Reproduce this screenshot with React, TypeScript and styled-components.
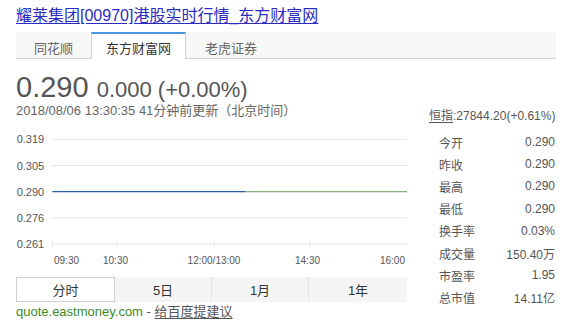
import React from "react";
import styled, { createGlobalStyle } from "styled-components";

const Global = createGlobalStyle`
  html, body { margin: 0; padding: 0; background: #fff; }
  body { font-family: "Liberation Sans", "Noto Sans CJK SC", sans-serif; }
`;

const Page = styled.div`
  width: 571px;
  height: 326px;
  box-sizing: border-box;
  padding: 5.5px 15px 0 16px;
  overflow: hidden;
  color: #555;
`;

const Title = styled.a`
  display: block;
  font-size: 16px;
  line-height: 20px;
  color: #2b2bc2;
  text-decoration: underline;
  text-underline-offset: 2px;
  white-space: nowrap;
`;

const TabBar = styled.div`
  margin-top: 6.5px;
  height: 26px;
  display: flex;
  background: #f7f7f7;
  border-bottom: 1px solid #d3d3d3;
`;

const Tab = styled.div<{ $active?: boolean; $w: number }>`
  width: ${(p) => p.$w}px;
  box-sizing: border-box;
  display: flex;
  align-items: center;
  justify-content: center;
  font-size: 13px;
  padding-top: 2px;
  color: ${(p) => (p.$active ? "#333" : "#666")};
  background: ${(p) => (p.$active ? "#fff" : "transparent")};
  border-top: 2px solid ${(p) => (p.$active ? "#4a94e0" : "transparent")};
  border-left: 1px solid ${(p) => (p.$active ? "#d3d3d3" : "transparent")};
  border-right: 1px solid ${(p) => (p.$active ? "#d3d3d3" : "transparent")};
  height: ${(p) => (p.$active ? "27px" : "26px")};
`;

const PriceRow = styled.div`
  margin-top: 11.5px;
  font-size: 29px;
  line-height: 32px;
  height: 32px;
  white-space: nowrap;
  color: #555;
`;

const BigPrice = styled.span`
  font-size: 29px;
`;

const Change = styled.span`
  font-size: 22px;
  line-height: 1;
`;

const Main = styled.div`
  display: flex;
  align-items: flex-start;
`;

const Left = styled.div`
  width: 391px;
  display: flex;
  flex-direction: column;
`;

const Stamp = styled.div`
  font-size: 13px;
  line-height: 16px;
  height: 16px;
  color: #666;
  white-space: nowrap;
`;

const ChartSvg = styled.svg`
  display: block;
  margin-top: 9.5px;
`;

const RangeTabs = styled.div`
  margin-top: 7px;
  display: grid;
  grid-template-columns: 99px 97px 97px 98px;
  height: 25px;
  background: #f5f5f5;
`;

const RangeTab = styled.div<{ $active?: boolean; $last?: boolean }>`
  box-sizing: border-box;
  display: flex;
  align-items: center;
  justify-content: center;
  font-size: 13px;
  color: #333;
  background: ${(p) => (p.$active ? "#fff" : "transparent")};
  border: ${(p) => (p.$active ? "1px solid #cfcfcf" : "none")};
  border-right: ${(p) =>
    p.$active ? "1px solid #cfcfcf" : p.$last ? "none" : "1px solid #e4e4e4"};
`;

const Footer = styled.div`
  font-size: 13px;
  line-height: 18px;
  height: 18px;
  margin-top: 1px;
  white-space: nowrap;
  color: #555;
`;

const Site = styled.span`
  color: #3d8a1e;
`;

const Suggest = styled.a`
  color: #555;
  text-decoration: underline;
  text-underline-offset: 2px;
`;

const Right = styled.div`
  margin-left: 22px;
  width: 127px;
  padding-top: 4px;
  display: flex;
  flex-direction: column;
`;

const Index = styled.div`
  font-size: 12px;
  line-height: 18px;
  height: 18px;
  text-align: right;
  color: #555;
  white-space: nowrap;
  padding-right: 1px;
`;

const IndexLink = styled.a`
  color: #555;
  text-decoration: underline;
  text-underline-offset: 2px;
`;

const Stats = styled.div`
  margin-top: 6.5px;
  display: flex;
  flex-direction: column;
`;

const StatRow = styled.div`
  height: 22.2px;
  display: flex;
  align-items: center;
  justify-content: space-between;
  padding-left: 10px;
  padding-right: 1px;
  font-size: 12px;
  color: #555;
`;

const grid = [
  { y: 11.3, label: "0.319" },
  { y: 37.5, label: "0.305" },
  { y: 63.7, label: "0.290" },
  { y: 89.9, label: "0.276" },
  { y: 116.1, label: "0.261" },
];

const ticks = [
  { x: 36.3, label: "09:30", anchor: "start", lx: 38 },
  { x: 100.7, label: "10:30", anchor: "middle", lx: 99.5 },
  { x: 198.3, label: "12:00/13:00", anchor: "middle", lx: 198 },
  { x: 294, label: "14:30", anchor: "middle", lx: 291.5 },
  { x: 391.5, label: "16:00", anchor: "end", lx: 389 },
];

const stats = [
  ["今开", "0.290"],
  ["昨收", "0.290"],
  ["最高", "0.290"],
  ["最低", "0.290"],
  ["换手率", "0.03%"],
  ["成交量", "150.40万"],
  ["市盈率", "1.95"],
  ["总市值", "14.11亿"],
];

const Chart = () => (
  <ChartSvg width={391} height={142} viewBox="0 0 391 142">
    {grid.map((g) => (
      <g key={g.label}>
        <line x1={36.3} x2={391.7} y1={g.y} y2={g.y} stroke="#e6e6e6" strokeWidth={1} />
        <text
          x={0.7}
          y={g.y + 4}
          fontSize={11}
          fill="#555"
          fontFamily="Liberation Sans, sans-serif"
        >
          {g.label}
        </text>
      </g>
    ))}
    {ticks.map((t) => (
      <g key={t.label}>
        <line x1={t.x} x2={t.x} y1={113} y2={118} stroke="#e2e2e2" strokeWidth={1} />
        <text
          x={t.lx}
          y={135.5}
          fontSize={10}
          fill="#555"
          textAnchor={t.anchor as "start" | "middle" | "end"}
          fontFamily="Liberation Sans, sans-serif"
        >
          {t.label}
        </text>
      </g>
    ))}
    <line x1={229} x2={391.7} y1={63.7} y2={63.7} stroke="#86b277" strokeWidth={1.2} />
    <line x1={36.3} x2={229} y1={63.7} y2={63.7} stroke="#2c5ea9" strokeWidth={1.2} />
  </ChartSvg>
);

export default function App() {
  return (
    <>
      <Global />
      <Page>
        <Title>耀莱集团[00970]港股实时行情_东方财富网</Title>
        <TabBar>
          <Tab $w={75}>同花顺</Tab>
          <Tab $w={95} $active>
            东方财富网
          </Tab>
          <Tab $w={90}>老虎证券</Tab>
        </TabBar>
        <PriceRow>
          <BigPrice>0.290</BigPrice> <Change>0.000 (+0.00%)</Change>
        </PriceRow>
        <Main>
          <Left>
            <Stamp>2018/08/06 13:30:35 41分钟前更新（北京时间）</Stamp>
            <Chart />
            <RangeTabs>
              <RangeTab $active>分时</RangeTab>
              <RangeTab>5日</RangeTab>
              <RangeTab>1月</RangeTab>
              <RangeTab $last>1年</RangeTab>
            </RangeTabs>
            <Footer>
              <Site>quote.eastmoney.com</Site> - <Suggest>给百度提建议</Suggest>
            </Footer>
          </Left>
          <Right>
            <Index>
              <IndexLink>恒指</IndexLink>:27844.20(+0.61%)
            </Index>
            <Stats>
              {stats.map(([k, v]) => (
                <StatRow key={k}>
                  <span>{k}</span>
                  <span>{v}</span>
                </StatRow>
              ))}
            </Stats>
          </Right>
        </Main>
      </Page>
    </>
  );
}
